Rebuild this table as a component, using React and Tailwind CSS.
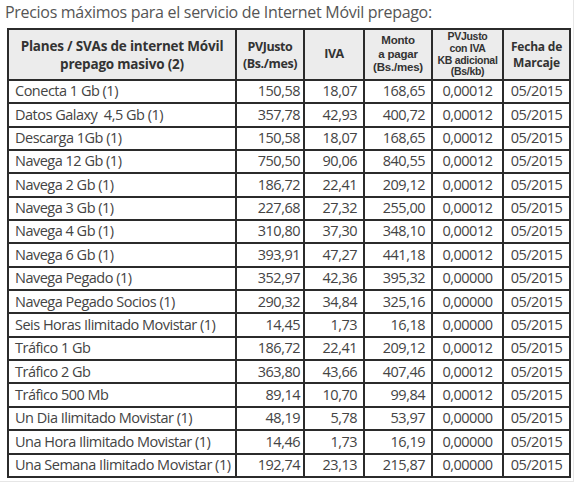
const rows = [
  ['Conecta 1 Gb (1)', '150,58', '18,07', '168,65', '0,00012'],
  ['Datos Galaxy  4,5 Gb (1)', '357,78', '42,93', '400,72', '0,00012'],
  ['Descarga 1Gb (1)', '150,58', '18,07', '168,65', '0,00012'],
  ['Navega 12 Gb (1)', '750,50', '90,06', '840,55', '0,00012'],
  ['Navega 2 Gb (1)', '186,72', '22,41', '209,12', '0,00012'],
  ['Navega 3 Gb (1)', '227,68', '27,32', '255,00', '0,00012'],
  ['Navega 4 Gb (1)', '310,80', '37,30', '348,10', '0,00012'],
  ['Navega 6 Gb (1)', '393,91', '47,27', '441,18', '0,00012'],
  ['Navega Pegado (1)', '352,97', '42,36', '395,32', '0,00000'],
  ['Navega Pegado Socios (1)', '290,32', '34,84', '325,16', '0,00000'],
  ['Seis Horas Ilimitado Movistar (1)', '14,45', '1,73', '16,18', '0,00000'],
  ['Tráfico 1 Gb', '186,72', '22,41', '209,12', '0,00012'],
  ['Tráfico 2 Gb', '363,80', '43,66', '407,46', '0,00012'],
  ['Tráfico 500 Mb', '89,14', '10,70', '99,84', '0,00012'],
  ['Un Dia Ilimitado Movistar (1)', '48,19', '5,78', '53,97', '0,00000'],
  ['Una Hora Ilimitado Movistar (1)', '14,46', '1,73', '16,19', '0,00000'],
  ['Una Semana Ilimitado Movistar (1)', '192,74', '23,13', '215,87', '0,00000'],
];

const th = 'border-2 border-[#2b2b2b] bg-[#ececec] font-bold text-[#333] text-center p-0 whitespace-nowrap';
const td = 'border-2 border-[#2b2b2b] h-[23.35px] p-0 leading-none';

export default function App() {
  return (
    <div
      className="w-[580px] h-[490px] bg-white text-[#444]"
      style={{ fontFamily: '"Open Sans", "Noto Sans", sans-serif' }}
    >
      <div className="w-[574px] h-[482px] border-r border-b border-[#e6e6e6]">
        <h1 className="pl-[5px] pt-[1px] h-[28px] text-[16px] leading-[22px] text-[#555] tracking-[-0.3px]">
          Precios máximos para el servicio de Internet Móvil prepago:
        </h1>
        <table className="ml-[7px] border-collapse table-fixed w-[562px] text-[14.5px] tracking-[-0.5px]">
          <colgroup>
            <col className="w-[228px]" />
            <col className="w-[68px]" />
            <col className="w-[60px]" />
            <col className="w-[68px]" />
            <col className="w-[71px]" />
            <col className="w-[67px]" />
          </colgroup>
          <thead>
            <tr className="h-[51px]">
              <th className={th + ' text-[13.5px] leading-[18px] tracking-[-0.2px]'}>
                Planes / SVAs de internet Móvil
                <br />
                prepago masivo (2)
              </th>
              <th className={th + ' text-[12.5px] leading-[17px] tracking-[-0.4px]'}>
                PVJusto
                <br />
                (Bs./mes)
              </th>
              <th className={th + ' text-[12.5px]'}>IVA</th>
              <th className={th + " text-[11.5px] leading-[13.5px] tracking-[-0.2px] font-['Liberation_Sans',sans-serif]"}>
                Monto
                <br />
                a pagar
                <br />
                (Bs./mes)
              </th>
              <th className={th + " text-[10.5px] leading-[11.8px] tracking-[-0.3px] font-['Liberation_Sans',sans-serif]"}>
                PVJusto
                <br />
                con IVA
                <br />
                KB adicional
                <br />
                (Bs/kb)
              </th>
              <th className={th + ' text-[12px] leading-[16px] tracking-[-0.2px]'}>
                Fecha de
                <br />
                Marcaje
              </th>
            </tr>
          </thead>
          <tbody>
            {rows.map((r) => (
              <tr key={r[0]}>
                <td className={td + ' pl-[6px] whitespace-pre'}>{r[0]}</td>
                <td className={td + ' text-right pr-[3px]'}>{r[1]}</td>
                <td className={td + ' text-right pr-[6px]'}>{r[2]}</td>
                <td className={td + ' text-right pr-[6px]'}>{r[3]}</td>
                <td className={td + ' text-center'}>{r[4]}</td>
                <td className={td + ' text-center'}>05/2015</td>
              </tr>
            ))}
          </tbody>
        </table>
      </div>
    </div>
  );
}
